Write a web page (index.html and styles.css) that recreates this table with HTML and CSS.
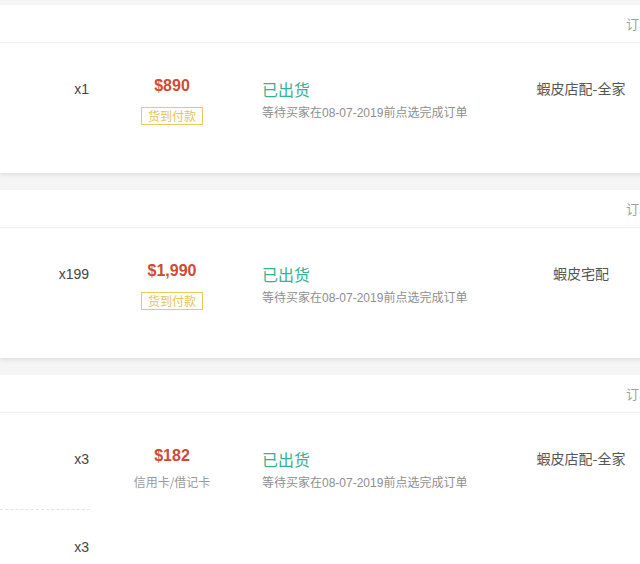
FILE: index.html
```html
<!DOCTYPE html>
<html lang="zh">
<head>
<meta charset="utf-8">
<link rel="stylesheet" href="styles.css">
</head>
<body>
<div class="page">
  <div class="card">
    <div class="head"><span class="orderno">订单编号：190807KQ2M5T1A</span></div>
    <div class="body">
      <div class="items"><div class="item"><span class="qty">x1</span></div></div>
      <div class="price-col">
        <div class="price">$890</div>
        <div class="badge">货到付款</div>
      </div>
      <div class="status-col">
        <div class="status">已出货</div>
        <div class="sub">等待买家在08-07-2019前点选完成订单</div>
      </div>
      <div class="ship">蝦皮店配-全家</div>
    </div>
  </div>

  <div class="card">
    <div class="head"><span class="orderno">订单编号：190807KP8R3D2C</span></div>
    <div class="body">
      <div class="items"><div class="item"><span class="qty">x199</span></div></div>
      <div class="price-col">
        <div class="price">$1,990</div>
        <div class="badge">货到付款</div>
      </div>
      <div class="status-col">
        <div class="status">已出货</div>
        <div class="sub">等待买家在08-07-2019前点选完成订单</div>
      </div>
      <div class="ship">蝦皮宅配</div>
    </div>
  </div>

  <div class="card">
    <div class="head"><span class="orderno">订单编号：190807KN4F6H9B</span></div>
    <div class="body">
      <div class="items">
        <div class="item first"><span class="qty">x3</span></div>
        <div class="item second"><span class="qty">x3</span></div>
      </div>
      <div class="price-col">
        <div class="price">$182</div>
        <div class="pay">信用卡/借记卡</div>
      </div>
      <div class="status-col">
        <div class="status">已出货</div>
        <div class="sub">等待买家在08-07-2019前点选完成订单</div>
      </div>
      <div class="ship">蝦皮店配-全家</div>
    </div>
  </div>
</div>
</body>
</html>
```

FILE: styles.css
```css
html, body {
  margin: 0;
  padding: 0;
  overflow: hidden;
  background: #f5f5f5;
}
body {
  font-family: "Liberation Sans", "Noto Sans CJK SC", Arial, sans-serif;
  color: #333;
}
.page {
  width: 640px;
  height: 564px;
  overflow: hidden;
  padding-top: 5px;
  box-sizing: border-box;
}
.card {
  width: 820px;
  background: #fff;
  box-shadow: 0 2px 4px rgba(0,0,0,0.09);
  margin-bottom: 17px;
}
.head {
  height: 38px;
  border-bottom: 1px solid #f1f1f1;
  box-sizing: border-box;
  display: flex;
  align-items: center;
  padding-left: 626px;
}
.orderno {
  font-size: 13px;
  color: #a0a0a0;
  white-space: nowrap;
  font-family: "Noto Sans CJK SC", sans-serif;
}
.body {
  display: grid;
  grid-template-columns: 90px 164px 282px 90px 1fr;
  align-items: start;
  min-height: 130px;
}
.items {
  display: flex;
  flex-direction: column;
}
.item {
  text-align: right;
  padding-right: 1px;
  padding-top: 36px;
}
.item.first {
  height: 97px;
  box-sizing: border-box;
  border-bottom: 1px dashed #e4e4e4;
}
.item.second {
  padding-top: 27px;
  height: 60px;
  box-sizing: border-box;
}
.qty {
  font-size: 14px;
  line-height: 20px;
  color: #444;
}
.price-col {
  display: flex;
  flex-direction: column;
  align-items: center;
  padding-top: 33px;
}
.price {
  font-size: 16px;
  font-weight: bold;
  line-height: 20px;
  color: #cf4b33;
}
.badge {
  margin-top: 11px;
  border: 1px solid #ecc95a;
  color: #e3c460;
  font-size: 12px;
  line-height: 16px;
  padding: 0 6px;
  font-family: "Noto Sans CJK SC", sans-serif;
}
.pay {
  margin-top: 8px;
  font-size: 12px;
  line-height: 16px;
  color: #9a9a9a;
  font-family: "Noto Sans CJK SC", sans-serif;
}
.status-col {
  padding-left: 8px;
  padding-top: 35px;
}
.status {
  font-size: 16px;
  line-height: 22px;
  color: #36b291;
  font-family: "Noto Sans CJK SC", sans-serif;
}
.sub {
  margin-top: 5px;
  font-size: 12px;
  line-height: 16px;
  color: #8e8e8e;
  white-space: nowrap;
}
.ship {
  padding-top: 35px;
  font-size: 14px;
  line-height: 20px;
  color: #555;
  text-align: center;
  white-space: nowrap;
  font-family: "Noto Sans CJK SC", sans-serif;
}
```
